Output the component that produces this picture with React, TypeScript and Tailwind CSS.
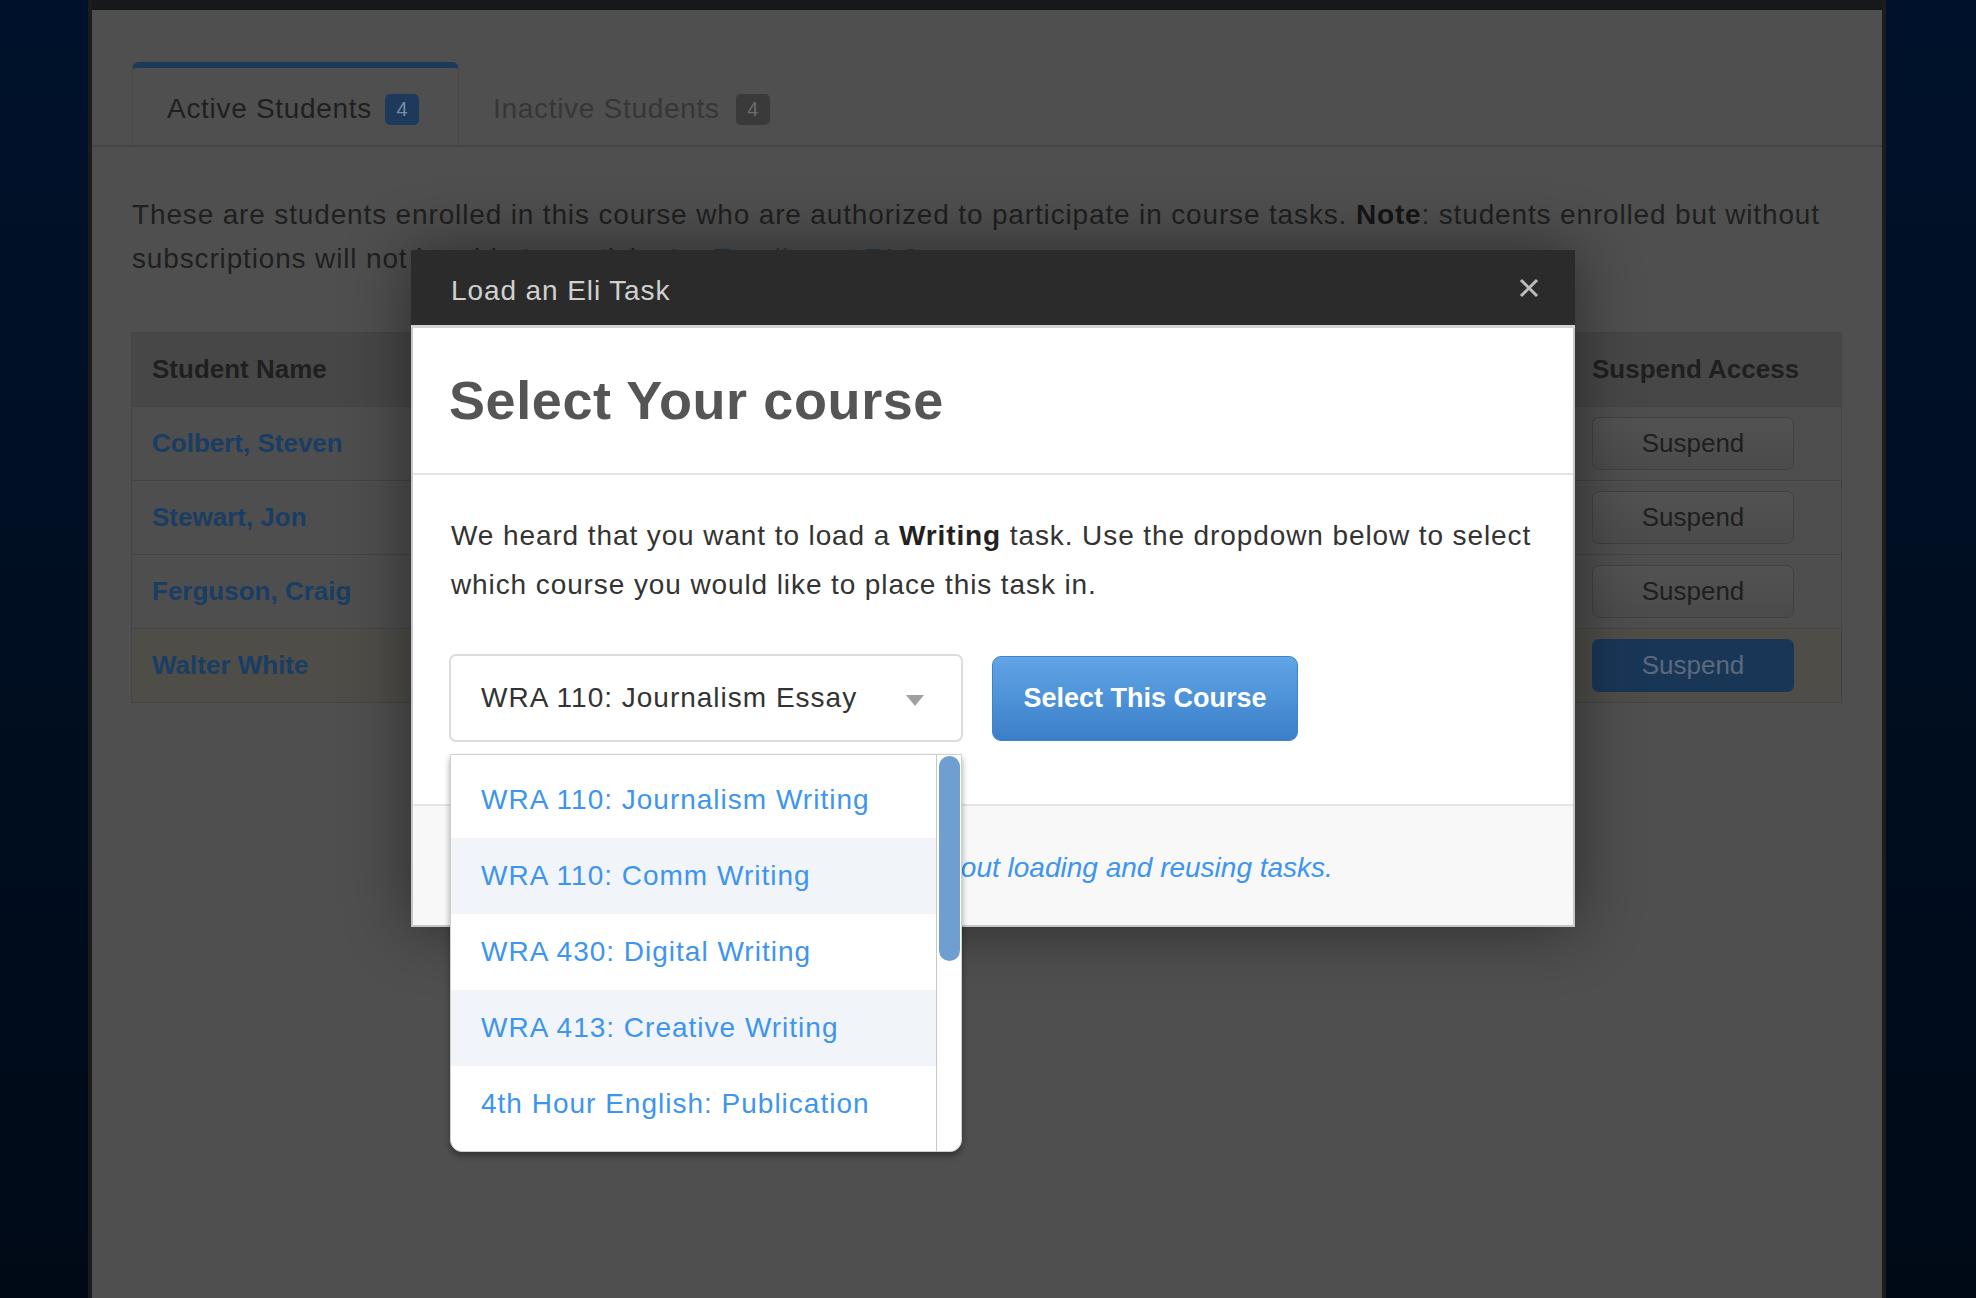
import { useState } from "react";

const students = [
  { name: "Colbert, Steven", flagged: false },
  { name: "Stewart, Jon", flagged: false },
  { name: "Ferguson, Craig", flagged: false },
  { name: "Walter White", flagged: true },
];

const courses = [
  "WRA 110: Journalism Writing",
  "WRA 110: Comm Writing",
  "WRA 430: Digital Writing",
  "WRA 413: Creative Writing",
  "4th Hour English: Publication",
];

function StudentTable() {
  return (
    <div className="mt-[51px] -ml-px border border-[#444] w-[1711px]">
      <div className="grid grid-cols-[440px_1fr_1fr_269px] h-[73px] bg-[#474747] items-center text-[26px] font-bold text-[#1f1f1f]">
        <div className="px-5">Student Name</div>
        <div className="px-5">Email</div>
        <div className="px-5">Last Active</div>
        <div className="px-5">Suspend Access</div>
      </div>
      {students.map((s) => (
        <div
          key={s.name}
          className={`grid grid-cols-[440px_1fr_1fr_269px] h-[74px] items-center border-t border-[#444] ${
            s.flagged ? "bg-[#4e4d48]" : "bg-[#4e4e4e]"
          }`}
        >
          <div className="px-5 text-[26px] font-bold text-[#1a3d63]">{s.name}</div>
          <div />
          <div />
          <div className="px-5">
            {s.flagged ? (
              <button className="w-[202px] h-[53px] rounded-[7px] bg-[#1a3657] text-[26px] text-[#5a6a7e]">
                Suspend
              </button>
            ) : (
              <button className="w-[202px] h-[53px] rounded-[7px] border border-[#414141] bg-[linear-gradient(180deg,#525252,#4b4b4b)] text-[26px] text-[#1e1e1e]">
                Suspend
              </button>
            )}
          </div>
        </div>
      ))}
    </div>
  );
}

function CourseModal() {
  const [selected] = useState("WRA 110: Journalism Essay");

  return (
    <div className="absolute left-[411px] top-[250px] w-[1164px] z-10 shadow-[0_0_60px_rgba(0,0,0,0.45)]">
      {/* header */}
      <div className="h-[75px] bg-[#2b2b2b] flex items-center justify-between pl-[40px] pr-[36px]">
        <span className="mt-[7px] text-[28px] text-[#d0d0d0] tracking-[0.9px]">Load an Eli Task</span>
        <svg width="20" height="20" viewBox="0 0 20 20" className="text-[#bdbdbd]">
          <path d="M2 2 L18 18 M18 2 L2 18" stroke="currentColor" strokeWidth="3" />
        </svg>
      </div>
      <div className="h-[3px] bg-[#d3d3d3]" />

      <div className="bg-white border-x-2 border-b-2 border-[#c6c6c6]">
        <div className="h-[145px] flex items-center px-[36px]">
          <h1 className="text-[54px] font-bold text-[#555] tracking-[0.6px]">Select Your course</h1>
        </div>
        <div className="h-[2px] bg-[#e4e4e4]" />

        <div className="px-[36px] pt-[36px] pb-[62px]">
          <p className="text-[28px] leading-[49px] text-[#333] pl-[2px] whitespace-nowrap tracking-[0.9px]">
            We heard that you want to load a <b className="text-[#222]">Writing</b> task. Use the dropdown below to select
            <br />
            which course you would like to place this task in.
          </p>

          <div className="mt-[45px] flex items-center">
            <div className="relative">
              <div className="w-[514px] h-[88px] border-2 border-[#dcdcdc] rounded-[7px] flex items-center justify-between pl-[30px] pr-[37px]">
                <span className="text-[28px] text-[#333] tracking-[1px]">{selected}</span>
                <svg width="18" height="11" viewBox="0 0 18 11" className="mt-[4px]">
                  <path d="M0 0 L18 0 L9 11 Z" fill="#a0a0a0" />
                </svg>
              </div>

              {/* open dropdown */}
              <div className="absolute left-px top-[100px] w-[512px] h-[398px] bg-white border border-[#cfcfcf] rounded-b-[12px] overflow-hidden flex shadow-[0_4px_6px_rgba(0,0,0,0.35)] z-20">
                <div className="flex-1 pt-[7px] border-r border-[#c8c8c8]">
                  {courses.map((c, i) => (
                    <div
                      key={c}
                      className={`h-[76px] flex items-center pl-[30px] text-[28px] text-[#3d95ef] tracking-[1px] ${
                        i % 2 === 1 ? "bg-[#f1f4f8]" : "bg-white"
                      }`}
                    >
                      {c}
                    </div>
                  ))}
                </div>
                <div className="w-[24px] pt-[1px] pl-[2px] pr-[1px]">
                  <div className="h-[205px] rounded-full bg-[#6e9fd0]" />
                </div>
              </div>
            </div>

            <button className="ml-[29px] w-[306px] h-[85px] rounded-[9px] bg-[linear-gradient(180deg,#61a5e6,#3a7fc9)] border border-[#3d82cc] text-[27px] font-bold text-white">
              Select This Course
            </button>
          </div>
        </div>

        <div className="h-[121px] bg-[#f8f8f8] border-t-2 border-[#e4e4e4] flex items-center pl-[41px] pr-[30px]">
          <span className="mt-[4px] text-[28px] italic text-[#3d95ef]">
            Visit the Eli Help Center to learn more about loading and reusing tasks.
          </span>
        </div>
      </div>
    </div>
  );
}

export default function App() {
  return (
    <div className="relative w-[1976px] h-[1298px] overflow-hidden flex font-['Liberation_Sans',Arial,sans-serif]">
      <div className="w-[88px] h-full bg-[linear-gradient(180deg,#00122b,#000a17)]" />

      <div className="w-[1798px] h-full border-x-4 border-[#1c1c1c] bg-[#4f4f4f] flex flex-col">
        <div className="h-[10px] bg-[#16181b]" />

        <div className="mt-[52px] pl-10 flex border-b-2 border-[#454545]">
          <div className="h-[83px] w-[327px] -mb-[2px] rounded-t-[7px] border-t-[6px] border-x border-t-[#1d3a5c] border-x-[#474747] bg-[#4f4f4f] flex items-center pl-[34px] pt-[5px]">
            <span className="text-[28px] text-[#1f1f1f] tracking-[0.7px]">Active Students</span>
            <span className="ml-[13px] w-[34px] h-[31px] rounded-[5px] bg-[#1d3a5c] text-[20px] text-[#7a8ca1] flex items-center justify-center">
              4
            </span>
          </div>
          <div className="h-[77px] mt-[6px] flex items-center pl-[34px] pr-8 pt-[5px]">
            <span className="text-[28px] text-[#363636] tracking-[0.7px]">Inactive Students</span>
            <span className="ml-[16px] w-[34px] h-[31px] rounded-[5px] bg-[#3a3a3a] text-[20px] text-[#6c6c6c] flex items-center justify-center">
              4
            </span>
          </div>
        </div>

        <div className="px-10">
          <p className="mt-[46px] text-[28px] leading-[44px] text-[#1f1f1f] whitespace-nowrap tracking-[0.85px]">
            These are students enrolled in this course who are authorized to participate in course tasks.{" "}
            <b className="text-[#151515]">Note</b>: students enrolled but without
            <br />
            subscriptions will not be able to participate. <span className="text-[#1a3d63]">Enrollment FAQ</span>.
          </p>

          <StudentTable />
        </div>
      </div>

      <div className="flex-1 h-full bg-[linear-gradient(180deg,#00122b,#000a17)]" />

      <CourseModal />
    </div>
  );
}
